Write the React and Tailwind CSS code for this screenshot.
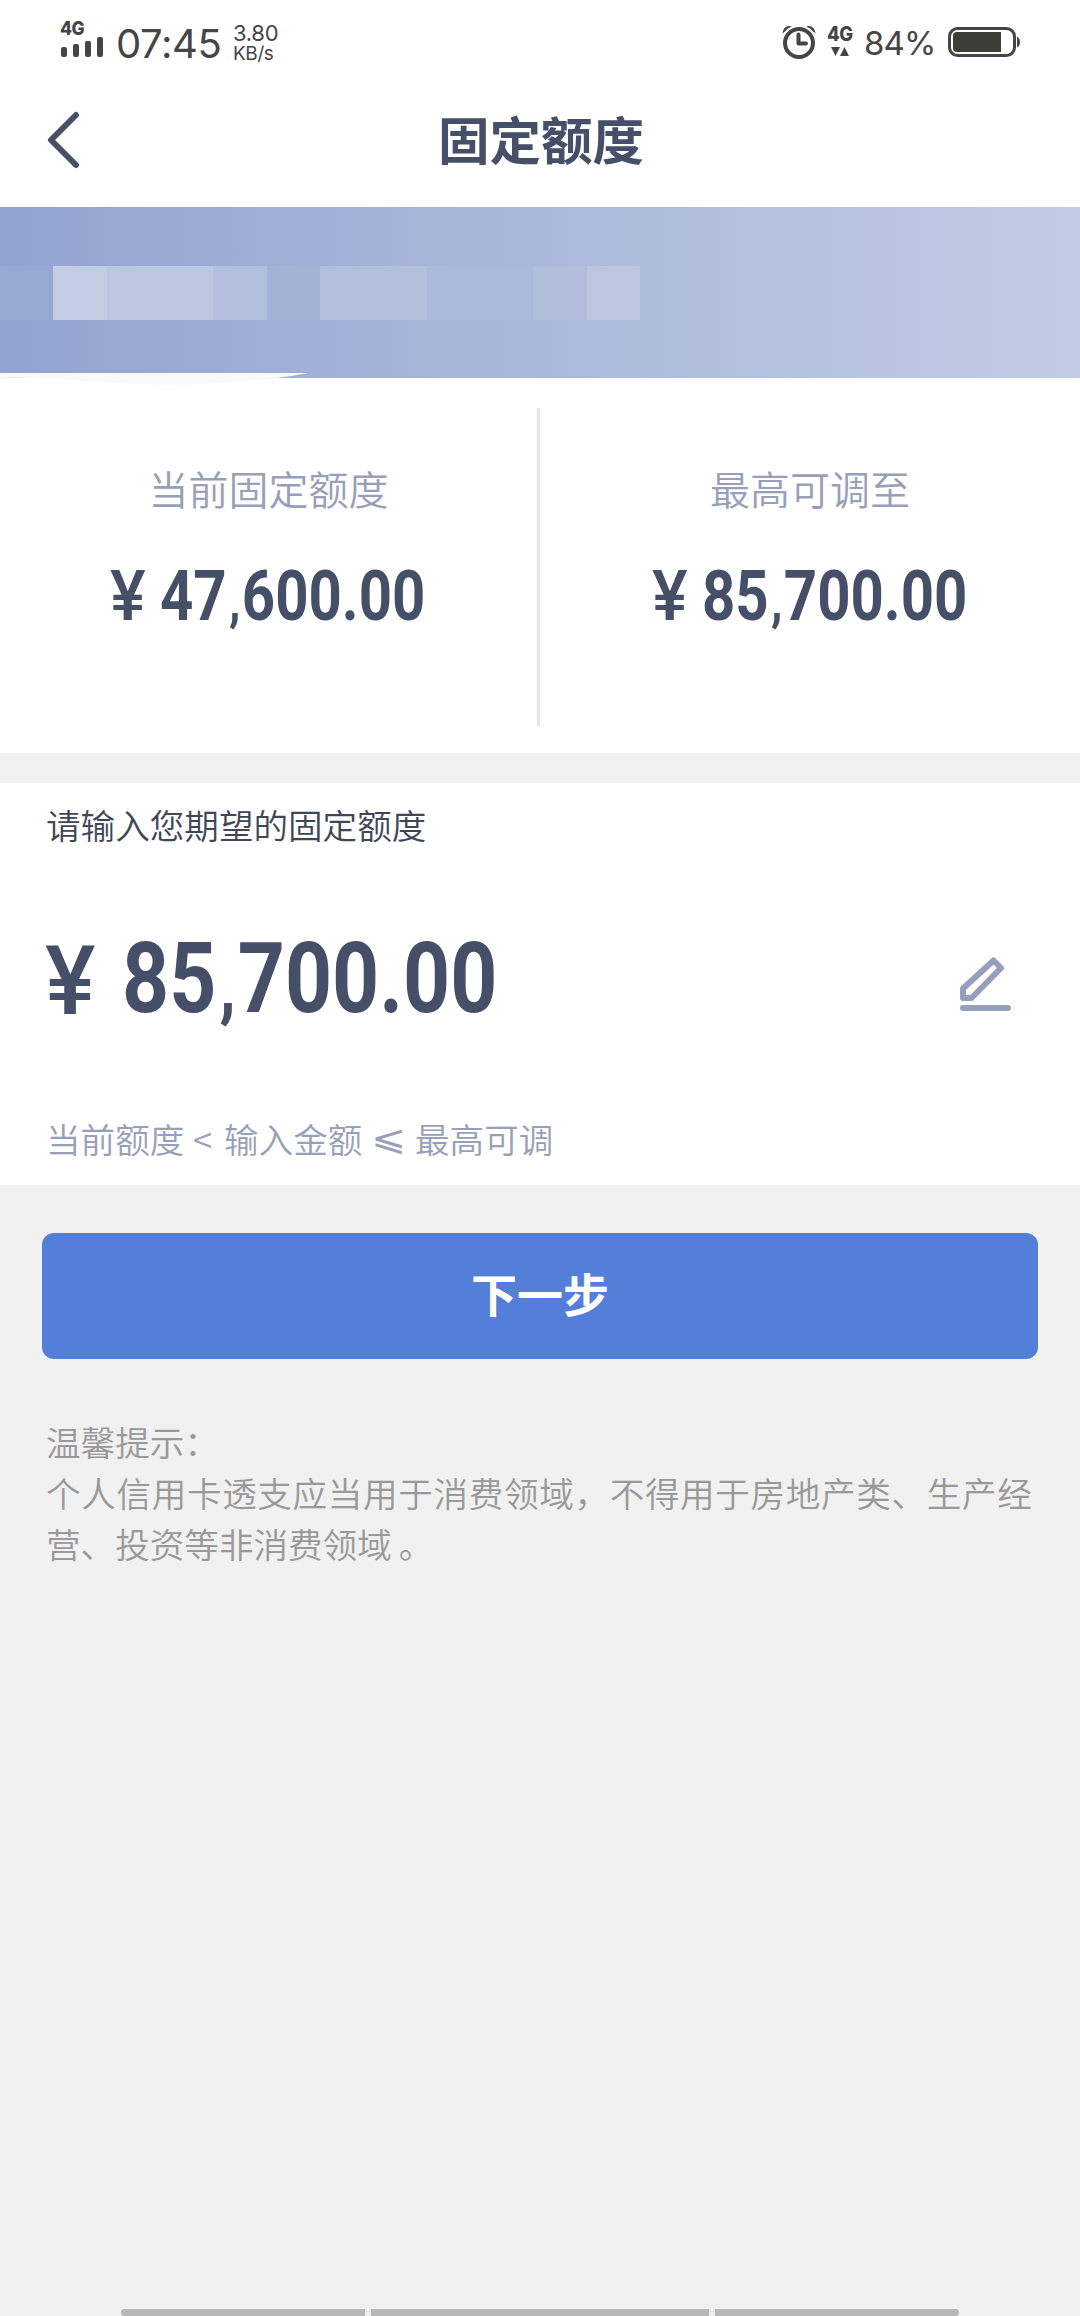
const TILES = [
  ["w-[53px]", "bg-[#97a8d3]"],
  ["w-[54px]", "bg-[#c2cde4]"],
  ["w-[106px]", "bg-[#bcc6e0]"],
  ["w-[54px]", "bg-[#b2c0dd]"],
  ["w-[53px]", "bg-[#a2b3d6]"],
  ["w-[107px]", "bg-[#b2c0dd]"],
  ["w-[106px]", "bg-[#abbadb]"],
  ["w-[54px]", "bg-[#b1bfdc]"],
  ["w-[53px]", "bg-[#bcc6e0]"],
];

function StatusBar() {
  return (
    <div className="flex h-[75px] pl-[60px] font-['Inter',sans-serif] text-[#454545]">
      <div className="w-[56px] pt-[21px]">
        <div className="h-[16px] origin-left scale-x-[0.92] text-[19px] leading-[16px] font-extrabold tracking-[-0.5px]">4G</div>
        <div className="flex h-[20px] items-end gap-[6px] pl-px">
          <i className="h-[10px] w-[6px] rounded-[2px] bg-[#454545]" />
          <i className="h-[13px] w-[6px] rounded-[2px] bg-[#454545]" />
          <i className="h-[16px] w-[6px] rounded-[2px] bg-[#454545]" />
          <i className="h-[20px] w-[6px] rounded-[2px] bg-[#454545]" />
        </div>
      </div>
      <div className="w-[117px] pt-[24px] text-[40px] leading-[40px] tracking-[-0.4px]">07:45</div>
      <div className="w-[549px] pt-[22px]">
        <div className="text-[22px] leading-[22px] tracking-[-0.3px]">3.80</div>
        <div className="pt-px text-[19px] leading-[18px] tracking-[-0.4px]">KB/s</div>
      </div>
      <svg className="mt-[24px] h-[36px] w-[34px]" viewBox="0 0 34 36" fill="none" stroke="#454545">
        <circle cx="17" cy="19" r="14" strokeWidth="4" />
        <path d="M16.500 10.500v9h7.500" strokeWidth="4" strokeLinecap="round" strokeLinejoin="round" />
        <path d="M0.500 9.500C1 4 5 0.500 10 2.500L6 4.500L3.500 7ZM33.500 9.500C33 4 29 0.500 24 2.500L28 4.500L30.500 7Z" fill="#454545" stroke="none" />
      </svg>
      <div className="w-[48px] pt-[26px] pl-[11px]">
        <div className="origin-left scale-x-[0.92] text-[20px] leading-[17px] font-extrabold tracking-[-0.5px]">4G</div>
        <svg className="mt-[4px] ml-[4px] h-[9px] w-[18px]" viewBox="0 0 18 9" fill="#454545">
          <path d="M0 0h9L4.500 9ZM9 9h9L13.500 0Z" />
        </svg>
      </div>
      <div className="w-[84px] pt-[24px] text-[33px] leading-[38px] tracking-[-0.9px]">84%</div>
      <svg className="mt-[27px] h-[30px] w-[72px]" viewBox="0 0 72 30" fill="none">
        <rect x="1.500" y="1.500" width="65" height="27" rx="8" stroke="#454545" strokeWidth="3" />
        <path d="M9 5H53V25H9Q5 25 5 21V9Q5 5 9 5Z" fill="#3e3e39" />
        <path d="M69 9.500q3 1.500 3 5.500t-3 5.500Z" fill="#454545" />
      </svg>
    </div>
  );
}

function Amount({ whole, rest }) {
  return (
    <span className="inline-block origin-left scale-x-[0.83] font-bold">
      {whole}
      <span className="ml-[0.05em] mr-[0.03em] text-[0.8em]">,</span>
      {rest}
    </span>
  );
}

function Limit({ label, yenClass, children }) {
  return (
    <div className="flex-1">
      <div className="text-center text-[40px] leading-[48px] font-[350] text-[#989fb9]">{label}</div>
      <div className={"mt-[52px] flex h-[64px] whitespace-nowrap font-['Roboto',sans-serif] text-[70px] leading-[64px] text-[#454f68] " + yenClass}>
        <span className="w-[50px] origin-left scale-x-[0.96] font-medium">¥</span>
        <span className="w-0">{children}</span>
      </div>
    </div>
  );
}

export default function App() {
  return (
    <div className="flex h-[2316px] w-[1080px] flex-col overflow-hidden bg-[#f1f1f1] font-['Noto_Sans_CJK_SC',sans-serif]">
      <div className="h-[207px] bg-white">
        <StatusBar />
        <div className="flex h-[132px] items-start">
          <svg className="mt-[36px] ml-[47px] h-[58px] w-[33px]" viewBox="0 0 33 58" fill="none" stroke="#454f68" strokeWidth="6" strokeLinecap="round" strokeLinejoin="round">
            <path d="M29 4L4 29L29 54" />
          </svg>
          <h1 className="mr-[78px] flex-1 pt-[33px] text-center text-[51.5px] leading-[60px] font-bold text-[#454f68]">固定额度</h1>
        </div>
      </div>

      <div className="relative h-[171px] bg-linear-to-r from-[#93a3d0] via-[#aab9da] to-[#c1cce4] pt-[59px]">
        <div className="flex h-[54px]">
          {TILES.map(([w, bg], i) => (
            <div key={i} className={"h-full " + w + " " + bg} />
          ))}
        </div>
        <svg className="absolute top-[166px] left-0 h-[12px] w-[308px]" viewBox="0 0 308 12">
          <path d="M0 0H308Q210 19 66 7Q30 4 0 5Z" fill="#f7f9fb" />
        </svg>
      </div>

      <div className="flex h-[375px] bg-white pt-[30px]">
        <div className="flex w-[537px] pt-[56px]">
          <Limit label="当前固定额度" yenClass="pl-[110px]"><Amount whole="47" rest="600.00" /></Limit>
        </div>
        <div className="h-[318px] w-[3px] bg-[#e6e6e6]" />
        <div className="flex w-[540px] pt-[56px]">
          <Limit label="最高可调至" yenClass="pl-[112px]"><Amount whole="85" rest="700.00" /></Limit>
        </div>
      </div>

      <div className="mt-[30px] h-[402px] bg-white pl-[46px]">
        <div className="pt-[17px] text-[34.6px] leading-[48px] font-[350] text-[#3f4657]">请输入您期望的固定额度</div>
        <div className="mt-[66px] flex h-[90px] font-['Roboto',sans-serif] leading-[90px] text-[#454f68]">
          <span className="-ml-px w-[77px] origin-left scale-x-[0.98] pt-[22px] text-[97px] font-medium">¥</span>
          <span className="w-[838px] pt-[19px] text-[99px]">
            <Amount whole="85" rest="700.00" />
          </span>
          <svg className="mt-[43px] h-[54px] w-[51px] shrink-0" viewBox="0 0 51 54" fill="none" stroke="#969fbd" strokeWidth="6">
            <path d="M3 41V31.500L33.500 3.500L41 11L11.500 41Z" strokeLinejoin="round" />
            <path d="M3 51H48" strokeLinecap="round" />
          </svg>
        </div>
        <div className="flex pt-[110px] text-[34.6px] leading-[48px] font-[350] text-[#989fb9]">
          <span className="w-[147px]">当前额度</span>
          <span className="w-[31px]">&lt;</span>
          <span className="w-[147px]">输入金额</span>
          <span className="w-[44px] origin-left scale-x-[1.2] font-['DejaVu_Sans'] font-extralight">⩽</span>
          <span>最高可调</span>
        </div>
      </div>

      <button className="mx-[42px] mt-[48px] h-[126px] shrink-0 rounded-[12px] bg-[#537fd8] pb-[7px] text-[46px] font-bold text-white">下一步</button>

      <div className="mt-[57px] ml-[46px] text-[34.6px] leading-[51px] font-[350] whitespace-nowrap text-[#999]">
        <p>温馨提示：</p>
        <p className="tracking-[0.65px]">个人信用卡透支应当用于消费领域，不得用于房地产类、生产经</p>
        <p>营、投资等非消费领域<span className="pl-[7px]">。</span></p>
      </div>

      <div className="mt-auto flex h-[7px] gap-[6px] pl-[121px]">
        <i className="w-[244px] rounded-l-[4px] bg-[#b8b8b8]" />
        <i className="w-[338px] bg-[#b8b8b8]" />
        <i className="w-[244px] rounded-r-[4px] bg-[#b8b8b8]" />
      </div>
    </div>
  );
}
